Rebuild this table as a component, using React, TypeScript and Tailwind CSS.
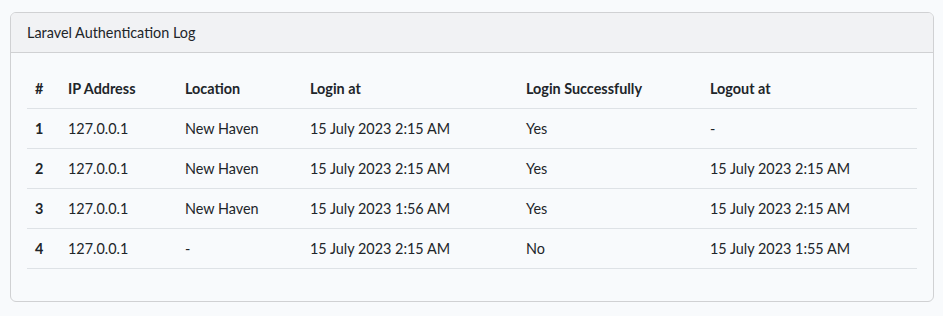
const rows = [
  { id: 1, ip: "127.0.0.1", location: "New Haven", login: "15 July 2023 2:15 AM", ok: "Yes", logout: "-" },
  { id: 2, ip: "127.0.0.1", location: "New Haven", login: "15 July 2023 2:15 AM", ok: "Yes", logout: "15 July 2023 2:15 AM" },
  { id: 3, ip: "127.0.0.1", location: "New Haven", login: "15 July 2023 1:56 AM", ok: "Yes", logout: "15 July 2023 2:15 AM" },
  { id: 4, ip: "127.0.0.1", location: "-", login: "15 July 2023 2:15 AM", ok: "No", logout: "15 July 2023 1:55 AM" },
];

function App() {
  return (
    <div
      className="min-h-[316px] bg-[#f8fafc] px-[10px] pt-[12px] text-[14.4px] leading-[23px] text-[#212529]"
      style={{ fontFamily: "Lato, 'Noto Sans', sans-serif" }}
    >
      <div className="w-[924px] rounded-[6px] border border-[#d0d1d3] bg-[#f8fafc]">
        <div className="h-[40px] border-b border-[#d0d1d3] bg-[#f1f2f4] px-[16px] py-[8px] rounded-t-[5px]">
          Laravel Authentication Log
        </div>
        <div className="p-[16px]">
          <table className="mb-[16px] w-full table-fixed border-collapse">
            <colgroup>
              <col className="w-[33px]" />
              <col className="w-[117px]" />
              <col className="w-[125px]" />
              <col className="w-[216px]" />
              <col className="w-[184px]" />
              <col />
            </colgroup>
            <thead>
              <tr className="border-b border-[#dee2e6]">
                <th className="p-[8px] text-left font-bold">#</th>
                <th className="p-[8px] text-left font-bold">IP Address</th>
                <th className="p-[8px] text-left font-bold">Location</th>
                <th className="p-[8px] text-left font-bold">Login at</th>
                <th className="p-[8px] text-left font-bold">Login Successfully</th>
                <th className="p-[8px] text-left font-bold">Logout at</th>
              </tr>
            </thead>
            <tbody>
              {rows.map((r) => (
                <tr key={r.id} className="border-b border-[#dee2e6]">
                  <td className="p-[8px] font-bold">{r.id}</td>
                  <td className="p-[8px]">{r.ip}</td>
                  <td className="p-[8px]">{r.location}</td>
                  <td className="p-[8px]">{r.login}</td>
                  <td className="p-[8px]">{r.ok}</td>
                  <td className="p-[8px]">{r.logout}</td>
                </tr>
              ))}
            </tbody>
          </table>
        </div>
      </div>
    </div>
  );
}

export default App;
